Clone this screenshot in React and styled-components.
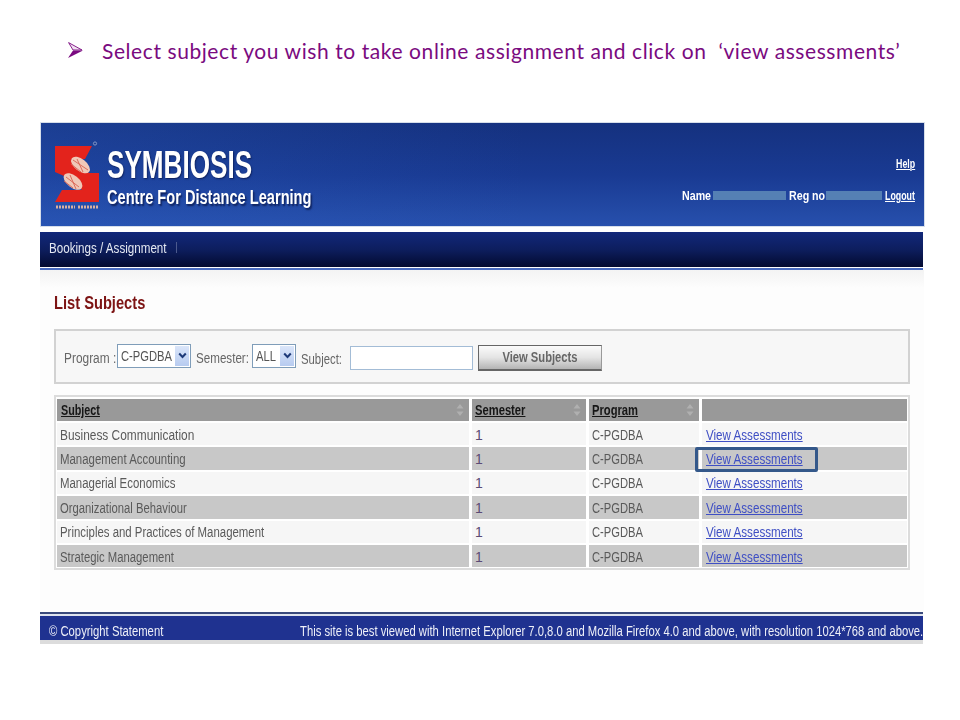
import React from "react";
import styled, { createGlobalStyle } from "styled-components";

const Global = createGlobalStyle`
  html, body { margin: 0; padding: 0; background: #fff; }
  body { font-family: "Liberation Sans", Arial, sans-serif; width: 960px; height: 720px; overflow: hidden; }
`;

const Page = styled.div`
  display: flex;
  flex-direction: column;
  width: 960px;
`;

const Heading = styled.div`
  height: 122px;
  box-sizing: border-box;
  padding: 38px 0 0 68px;
  display: flex;
  align-items: flex-start;
  gap: 19px;
  color: #7a0a80;
  font-family: Lato, "Open Sans", sans-serif;
  font-size: 21px;
  line-height: 26px;
  letter-spacing: 0.58px;
  white-space: pre;
`;

const Bullet = styled.svg`
  width: 15px;
  height: 16px;
  margin-top: 4px;
  flex: none;
`;

const Shot = styled.div`
  width: 885px;
  height: 523px;
  margin-left: 40px;
  box-sizing: border-box;
  padding-top: 1px;
  display: flex;
  flex-direction: column;
  filter: blur(0.35px);
`;

const Narrow = styled.span`
  display: inline-block;
  white-space: nowrap;
  transform: scaleX(${(p) => p.$x || 0.815});
  transform-origin: ${(p) => p.$origin || "left"} center;
  text-decoration: ${(p) => (p.$line ? "underline" : "none")};
`;

const Banner = styled.header`
  height: 103px;
  margin: 0 1px;
  box-sizing: border-box;
  outline: 1px solid #d6deea;
  background:
    linear-gradient(90deg, rgba(44, 96, 196, 0.28), rgba(44, 96, 196, 0) 55%),
    linear-gradient(180deg, #15317f 0%, #193a92 50%, #2750ad 100%);
  display: flex;
  justify-content: space-between;
  padding: 18px 9px 0 13px;
`;

const Brand = styled.div`
  display: flex;
  gap: 6px;
`;

const BrandText = styled.div`
  display: flex;
  flex-direction: column;
  padding-top: 5px;
  color: #fff;
`;

const BrandName = styled(Narrow)`
  font-size: 39px;
  line-height: 38px;
  font-weight: 700;
  text-shadow: 1px 1px 2px rgba(5, 15, 60, 0.7);
`;

const BrandSub = styled(Narrow)`
  font-size: 20px;
  line-height: 26px;
  font-weight: 700;
  text-shadow: 2px 2px 2px rgba(5, 15, 60, 0.7);
`;

const Account = styled.div`
  display: flex;
  flex-direction: column;
  align-items: flex-end;
  color: #fff;
  font-size: 13px;
  font-weight: 700;
  padding-top: 15px;
  gap: 17px;
`;

const AccountRow = styled.div`
  display: flex;
  align-items: center;
  height: 14px;
`;

const AccountLabel = styled.span`
  width: ${(p) => p.$w}px;
  white-space: nowrap;
`;

const Masked = styled.span`
  width: ${(p) => p.$w}px;
  height: 9px;
  margin-right: ${(p) => p.$gap}px;
  background: #5580b4;
  display: block;
`;

const TopLink = styled.a`
  color: #fff;
  white-space: nowrap;
`;

const Nav = styled.nav`
  height: 35px;
  margin: 6px 2px 0 0;
  background: linear-gradient(180deg, #12287a 0%, #0d1e5e 50%, #030a30 100%);
  color: #e4e8f2;
  font-size: 14px;
  display: flex;
  align-items: center;
  padding: 0 0 4px 9px;
  box-sizing: border-box;
`;

const NavSep = styled.span`
  width: 1px;
  height: 11px;
  background: #4c5a8e;
  margin-left: -15px;
`;

const Rule = styled.div`
  height: 2px;
  margin: 1px 2px 0 0;
  background: #4a6cc0;
`;

const Content = styled.main`
  flex: 1;
  background: linear-gradient(180deg, #f3f3f3 0, #fdfdfd 18px);
  padding: 21px 14px 0;
  margin-right: 1px;
`;

const Title = styled.h1`
  margin: 0;
  height: 38px;
  color: #7d1414;
  font-size: 18px;
  line-height: 24px;
  font-weight: 700;
`;

const Filter = styled.form`
  width: 856px;
  height: 55px;
  box-sizing: border-box;
  border: 2px solid #d2d2d2;
  background: #f7f7f7;
  display: flex;
  align-items: center;
  padding: 2px 0 0 8px;
  color: #666;
  font-size: 14px;
`;

const FilterLabel = styled.label`
  width: ${(p) => p.$w}px;
  flex: none;
  white-space: nowrap;
  padding-top: ${(p) => p.$top || 0}px;
`;

const Select = styled.div`
  width: ${(p) => p.$w}px;
  height: 24px;
  flex: none;
  box-sizing: border-box;
  border: 1px solid #7f9db9;
  background: #fff;
  color: #555;
  font-size: 14px;
  display: flex;
  padding: 1px 1px 1px 3px;
  margin: 0 ${(p) => p.$mr}px 4px 0;
`;

const SelectText = styled(Narrow)`
  flex: 1 1 0;
  width: 0;
  line-height: 21px;
`;

const SelectArrow = styled.span`
  width: 14px;
  background: linear-gradient(180deg, #dbe6fa, #b7cbf0);
  display: flex;
  align-items: center;
  justify-content: center;
`;

const Search = styled.input`
  width: 123px;
  height: 24px;
  flex: none;
  box-sizing: border-box;
  border: 1px solid #a3bcd6;
  background: #fff;
  margin: 0 5px 0 0;
`;

const Submit = styled.button`
  width: 124px;
  height: 26px;
  flex: none;
  box-sizing: border-box;
  border: 1px solid #666;
  border-right-color: #999;
  border-bottom-width: 2px;
  background: linear-gradient(180deg, #fbfbfb 0%, #e4e4e4 50%, #b4b4b4 100%);
  color: #666;
  font: 700 14px "Liberation Sans", Arial, sans-serif;
  padding: 0;
`;

const Table = styled.div`
  width: 856px;
  box-sizing: border-box;
  margin-top: 11px;
  border: 2px solid #dcdcdc;
  background: #fff;
  padding: 2px 1px 1px;
  display: flex;
  flex-direction: column;
  gap: 2px;
`;

const Row = styled.div`
  display: grid;
  grid-template-columns: 412px 114px 110px 205px;
  column-gap: 3px;
  height: ${(p) => (p.$head ? 22 : 22.4)}px;
`;

const HeadCell = styled.div`
  background: #999;
  color: #161616;
  font-size: 14px;
  font-weight: 700;
  display: flex;
  align-items: center;
  padding: 0 5px 0 ${(p) => p.$pad || 3}px;
  overflow: hidden;
  position: relative;
`;

const HeadSort = styled.span`
  display: flex;
  position: absolute;
  right: 5px;
  top: 4px;
`;

const Cell = styled.div`
  position: relative;
  background: ${(p) => (p.$alt ? "#c8c8c8" : "#f6f6f6")};
  color: ${(p) => p.$color || "#5a5a5a"};
  font-size: 14px;
  display: flex;
  align-items: center;
  padding: 1px 0 0 ${(p) => p.$pad || 3}px;
`;

const ViewLink = styled.a`
  color: #3f4fc4;
`;

const Callout = styled.span`
  position: absolute;
  left: -7px;
  top: 0;
  width: 123px;
  height: 25px;
  box-sizing: border-box;
  border: 3px solid #34588a;
  border-radius: 2px;
`;

const Footer = styled.footer`
  width: 883px;
  height: 32px;
  margin-bottom: 1px;
  box-sizing: border-box;
  border-top: 2px solid #3a4a7c;
  background: #dfe3ee;
  padding-top: 2px;
`;

const FooterBar = styled.div`
  height: 24px;
  background: #1f3290;
  color: #eef0f8;
  font-size: 14px;
  display: flex;
  justify-content: space-between;
  align-items: center;
  padding: 5px 0 0 9px;
  box-sizing: border-box;
  overflow: hidden;
`;

const FooterNote = styled.div`
  width: 623px;
  flex: none;
`;

const FooterEdge = styled.div`
  height: 4px;
  background: #dcdcdc;
`;

const subjects = [
  { name: "Business Communication", squeeze: 0.85 },
  { name: "Management Accounting" },
  { name: "Managerial Economics" },
  { name: "Organizational Behaviour", squeeze: 0.806 },
  { name: "Principles and Practices of Management" },
  { name: "Strategic Management", squeeze: 0.808 },
];

const Logo = () => (
  <svg width="47" height="70" viewBox="0 0 47 70">
    <polygon fill="#e3231c" points="1,5 38,5 31,18 17,18 35,32 45,32 45,61 1,61 8,49 28,49 10,35 1,31" />
    <ellipse cx="26.5" cy="24" rx="11" ry="6" transform="rotate(38 26.5 24)" fill="#f0c8b8" />
    <ellipse cx="19" cy="40.5" rx="11" ry="6" transform="rotate(38 19 40.5)" fill="#f0c8b8" />
    <path d="M19 19l15 10M23 18l6 13M17 23l10 8M12 36l13 10M16 34l6 14M10 40l9 7" stroke="#d8604f" strokeWidth="0.9" />
    <circle cx="41" cy="2.5" r="1.6" fill="none" stroke="#9aa9cf" strokeWidth="0.8" />
    <path d="M2 66h19M24 66h20" stroke="#d8b0a0" strokeWidth="3" strokeDasharray="2 1" />
  </svg>
);

const SortIcon = () => (
  <svg width="8" height="14" viewBox="0 0 8 14">
    <path d="M4 1l3.5 4.5h-7zM4 13L.5 8.5h7z" fill="#b0b0b0" />
  </svg>
);

const Chevron = () => (
  <svg width="9" height="7" viewBox="0 0 9 7">
    <path d="M1.2 1.5L4.5 5l3.3-3.5" fill="none" stroke="#1e3a78" strokeWidth="2" />
  </svg>
);

const App = () => {
  return (
    <Page>
      <Global />
      <Heading>
        <Bullet viewBox="0 0 15 16">
          <path d="M0 16l15-7.5H5z" fill="#7a0a80" />
          <path d="M.6.6L14 8H5z" fill="#f0e0f0" stroke="#7a0a80" strokeWidth="0.9" />
        </Bullet>
        <span>{"Select subject you wish to take online assignment and click on  ‘view assessments’"}</span>
      </Heading>
      <Shot>
        <Banner>
          <Brand>
            <Logo />
            <BrandText>
              <BrandName $x={0.67}>SYMBIOSIS</BrandName>
              <BrandSub $x={0.73}>Centre For Distance Learning</BrandSub>
            </BrandText>
          </Brand>
          <Account>
            <TopLink href="#"><Narrow $x={0.68} $origin="right" $line>Help</Narrow></TopLink>
            <AccountRow>
              <AccountLabel $w={31}><Narrow $x={0.82}>Name</Narrow></AccountLabel>
              <Masked $w={73} $gap={3} />
              <AccountLabel $w={37}><Narrow $x={0.82}>Reg no</Narrow></AccountLabel>
              <Masked $w={56} $gap={3} />
              <AccountLabel $w={30}>
                <TopLink href="#"><Narrow $x={0.68} $line>Logout</Narrow></TopLink>
              </AccountLabel>
            </AccountRow>
          </Account>
        </Banner>
        <Nav>
          <Narrow $x={0.83}>Bookings / Assignment</Narrow>
          <NavSep />
        </Nav>
        <Rule />
        <Content>
          <Title><Narrow>List Subjects</Narrow></Title>
          <Filter>
            <FilterLabel $w={53}><Narrow $x={0.85}>Program :</Narrow></FilterLabel>
            <Select $w={74} $mr={5}>
              <SelectText $x={0.8}>C-PGDBA</SelectText>
              <SelectArrow><Chevron /></SelectArrow>
            </Select>
            <FilterLabel $w={56}><Narrow $x={0.83}>Semester:</Narrow></FilterLabel>
            <Select $w={44} $mr={5}>
              <SelectText $x={0.8}>ALL</SelectText>
              <SelectArrow><Chevron /></SelectArrow>
            </Select>
            <FilterLabel $w={49} $top={3}><Narrow $x={0.81}>Subject:</Narrow></FilterLabel>
            <Search />
            <Submit><Narrow $x={0.8} $origin="center">View Subjects</Narrow></Submit>
          </Filter>
          <Table>
            <Row $head>
              <HeadCell $pad={4}><Narrow $x={0.77} $line>Subject</Narrow><HeadSort><SortIcon /></HeadSort></HeadCell>
              <HeadCell><Narrow $x={0.8} $line>Semester</Narrow><HeadSort><SortIcon /></HeadSort></HeadCell>
              <HeadCell><Narrow $x={0.8} $line>Program</Narrow><HeadSort><SortIcon /></HeadSort></HeadCell>
              <HeadCell />
            </Row>
            {subjects.map((subject, i) => (
              <Row key={subject.name}>
                <Cell $alt={i % 2 === 1}><Narrow $x={subject.squeeze}>{subject.name}</Narrow></Cell>
                <Cell $alt={i % 2 === 1} $color="#5b4b75" $pad={3}>1</Cell>
                <Cell $alt={i % 2 === 1} $pad={3}><Narrow $x={0.8}>C-PGDBA</Narrow></Cell>
                <Cell $alt={i % 2 === 1} $pad={4}>
                  <ViewLink href="#"><Narrow $x={0.83} $line>View Assessments</Narrow></ViewLink>
                  {i === 1 && <Callout />}
                </Cell>
              </Row>
            ))}
          </Table>
        </Content>
        <Footer>
          <FooterBar>
            <Narrow $x={0.806}>© Copyright Statement</Narrow>
            <FooterNote>
              <Narrow $x={0.804}>This site is best viewed with Internet Explorer 7.0,8.0 and Mozilla Firefox 4.0 and above, with resolution 1024*768 and above.</Narrow>
            </FooterNote>
          </FooterBar>
          <FooterEdge />
        </Footer>
      </Shot>
    </Page>
  );
};

export default App;
